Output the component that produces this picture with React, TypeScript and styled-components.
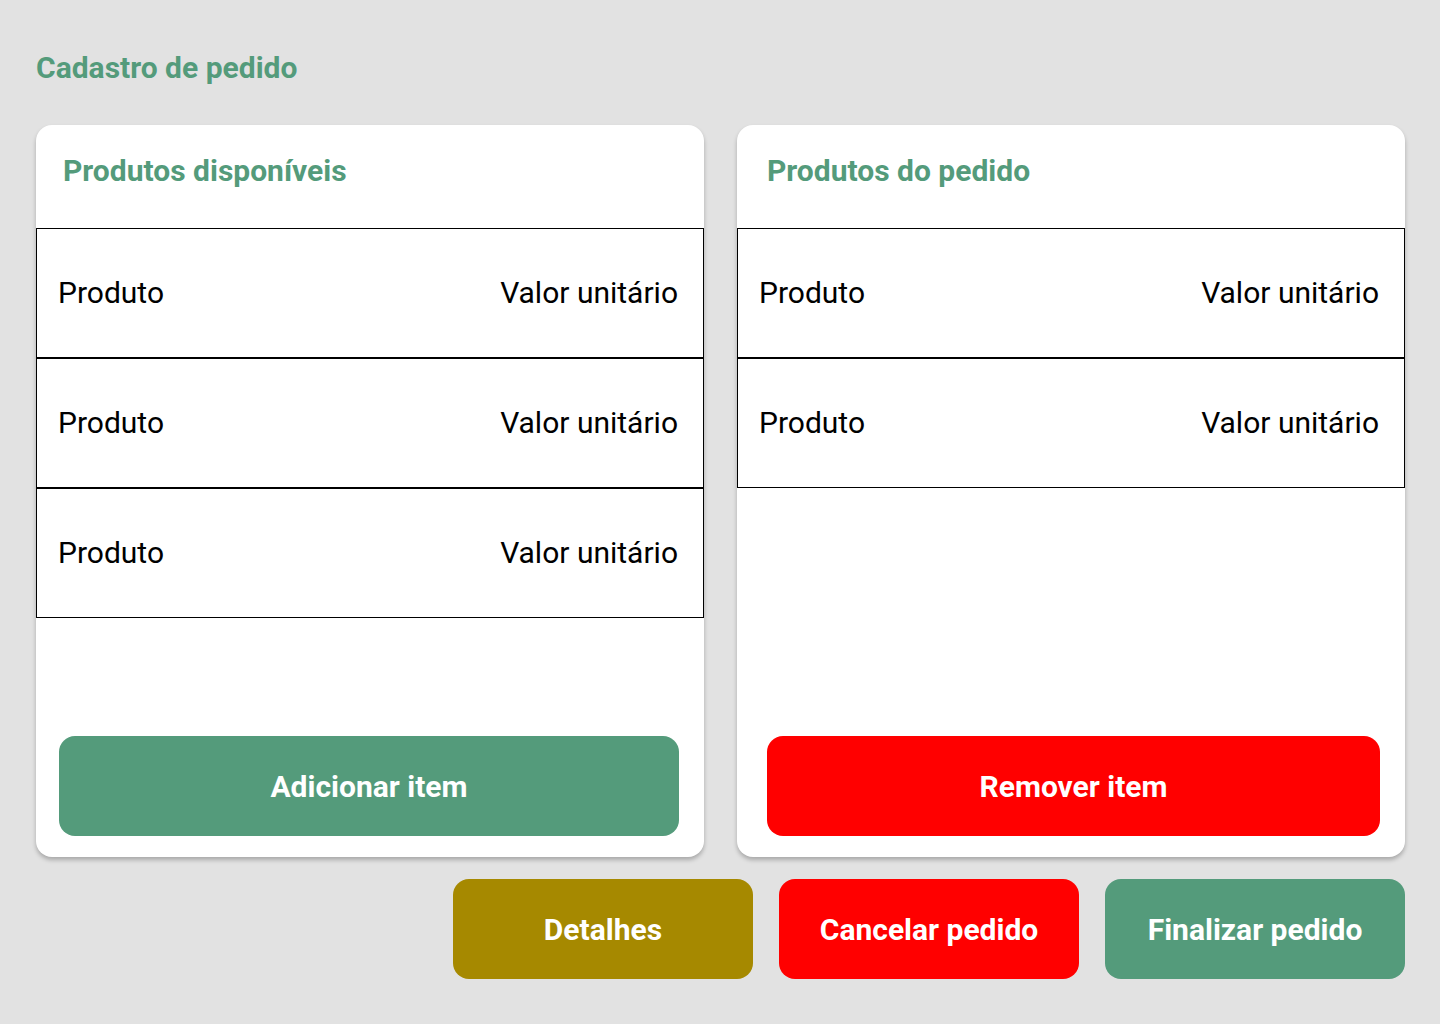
import React from "react";
import styled, { createGlobalStyle } from "styled-components";

const GlobalStyle = createGlobalStyle`
  html, body { margin: 0; padding: 0; background: #e2e2e2; }
  body { font-family: Roboto, "Liberation Sans", sans-serif; }
  * { box-sizing: border-box; }
`;

const GREEN = "#549b7b";
const RED = "#ff0000";
const MUSTARD = "#a68900";

const Page = styled.div`
  width: 1440px;
  min-height: 1024px;
  padding: 49px 35px 0 36px;
`;

const Title = styled.h1`
  margin: 0;
  font-size: 30px;
  font-weight: 700;
  color: ${GREEN};
  line-height: 38px;
`;

const Columns = styled.div`
  display: grid;
  grid-template-columns: 668px 668px;
  column-gap: 33px;
  margin-top: 38px;
`;

const Card = styled.section`
  height: 732px;
  background: #fff;
  border-radius: 16px;
  box-shadow: 0 3px 4px rgba(0, 0, 0, 0.25);
  display: flex;
  flex-direction: column;
  overflow: hidden;
`;

const CardHeader = styled.h2<{ $indent: number }>`
  margin: 0;
  height: 103px;
  padding: 27px 0 0 ${(p) => p.$indent}px;
  font-size: 30px;
  font-weight: 700;
  color: ${GREEN};
  line-height: 38px;
  flex-shrink: 0;
`;

const Table = styled.div`
  display: flex;
  flex-direction: column;
`;

const Row = styled.div`
  height: 130px;
  border: 1px solid #000;
  display: flex;
  align-items: center;
  justify-content: space-between;
  padding: 0 25px 1px 21px;
  font-size: 30px;
  color: #000;
`;

const Spacer = styled.div`
  flex: 1;
`;

const ActionWrap = styled.div<{ $left: number; $right: number }>`
  padding: 0 ${(p) => p.$right}px 21px ${(p) => p.$left}px;
`;

const Button = styled.button<{ $bg: string }>`
  display: flex;
  align-items: center;
  justify-content: center;
  width: 100%;
  height: 100px;
  border: none;
  border-radius: 16px;
  background: ${(p) => p.$bg};
  color: #fff;
  font-family: Roboto, "Liberation Sans", sans-serif;
  font-size: 30px;
  font-weight: 700;
  cursor: pointer;
  padding: 0;
`;

const Footer = styled.div`
  display: flex;
  justify-content: flex-end;
  gap: 26px;
  margin-top: 22px;
`;

const FooterButton = styled(Button)`
  width: 300px;
`;

const ProductRow = () => (
  <Row>
    <span>Produto</span>
    <span>Valor unitário</span>
  </Row>
);

export default function App() {
  return (
    <>
      <GlobalStyle />
      <Page>
        <Title>Cadastro de pedido</Title>
        <Columns>
          <Card>
            <CardHeader $indent={27}>Produtos disponíveis</CardHeader>
            <Table>
              <ProductRow />
              <ProductRow />
              <ProductRow />
            </Table>
            <Spacer />
            <ActionWrap $left={23} $right={25}>
              <Button $bg={GREEN}>Adicionar item</Button>
            </ActionWrap>
          </Card>
          <Card>
            <CardHeader $indent={30}>Produtos do pedido</CardHeader>
            <Table>
              <ProductRow />
              <ProductRow />
            </Table>
            <Spacer />
            <ActionWrap $left={30} $right={25}>
              <Button $bg={RED}>Remover item</Button>
            </ActionWrap>
          </Card>
        </Columns>
        <Footer>
          <FooterButton $bg={MUSTARD}>Detalhes</FooterButton>
          <FooterButton $bg={RED}>Cancelar pedido</FooterButton>
          <FooterButton $bg={GREEN}>Finalizar pedido</FooterButton>
        </Footer>
      </Page>
    </>
  );
}
